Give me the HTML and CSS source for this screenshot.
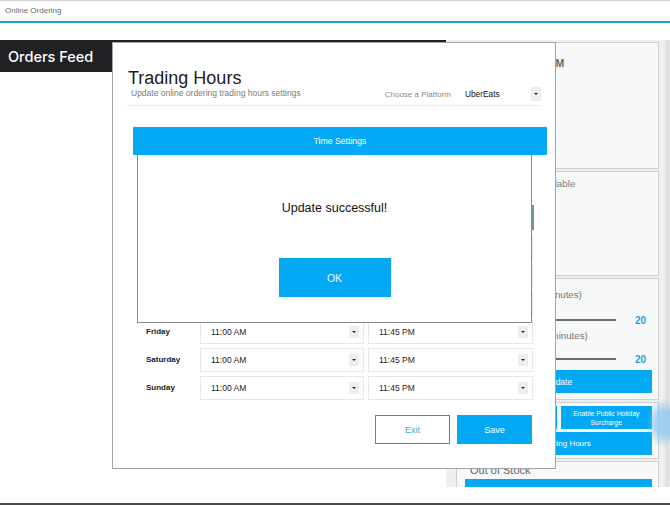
FILE: index.html
```html
<!DOCTYPE html>
<html>
	<head>
		<title>Online Ordering</title>
		<meta charset = "utf-8">
		<link rel="stylesheet" href="styles.css">
	</head>

	<body>
		<div class = "topbar">Online Ordering</div>

		<div class = "main">
			<div class = "feed">
				<p class = "feed_head">Orders Feed</p>
			</div>

			<div class = "side">
				<div class = "card card_hours">
					<p class = "open_time">Open from 11:00 AM</p>
				</div>
				<div class = "card card_status">
					<p class = "status">Delivery Status: Available</p>
				</div>
				<div class = "card card_times">
					<p class = "label first">Preparation Time (minutes)</p>
					<div class = "slider"><span class = "track"></span><span class = "val">20</span></div>
					<p class = "label">Max Delivery Time (minutes)</p>
					<div class = "slider"><span class = "track"></span><span class = "val">20</span></div>
					<button class = "side_btn update">Update</button>
				</div>
				<div class = "card card_actions">
					<button class = "side_btn">Pause Orders</button>
					<button class = "side_btn small">Enable Public Holiday<br>Surcharge</button>
					<button class = "side_btn wide">Set Trading Hours</button>
				</div>
				<div class = "card card_stock">
					<p class = "stock_tit">Out of Stock</p>
					<button class = "side_btn">Items</button>
				</div>
			</div>

			<div class = "scroll"></div>
		</div>

		<div class = "bottom"></div>

		<div class = "glow"></div>

		<div class = "modal">
			<div class = "modal_head">
				<div class = "head_left">
					<h1 class = "modal_tit">Trading Hours</h1>
					<p class = "modal_sub">Update online ordering trading hours settings</p>
				</div>
				<div class = "platform">
					<span class = "platform_tit">Choose a Platform</span>
					<span class = "select platform_sel">UberEats<i class = "arrow"></i></span>
				</div>
			</div>

			<p class = "bar">Time Settings</p>

			<div class = "hours">
				<span class = "col_tit"></span><span class = "col_tit">Open</span><span class = "col_tit">Close</span>

				<span class = "day">Monday</span>
				<span class = "select">11:00 AM<i class = "arrow"></i></span>
				<span class = "select">11:45 PM<i class = "arrow"></i></span>

				<span class = "day">Tuesday</span>
				<span class = "select">11:00 AM<i class = "arrow"></i></span>
				<span class = "select">11:45 PM<i class = "arrow"></i></span>

				<span class = "day">Wednesday</span>
				<span class = "select">11:00 AM<i class = "arrow"></i></span>
				<span class = "select">11:45 PM<i class = "arrow"></i></span>

				<span class = "day">Thursday</span>
				<span class = "select">11:00 AM<i class = "arrow"></i></span>
				<span class = "select">11:45 PM<i class = "arrow"></i></span>

				<span class = "day">Friday</span>
				<span class = "select">11:00 AM<i class = "arrow"></i></span>
				<span class = "select">11:45 PM<i class = "arrow"></i></span>

				<span class = "day">Saturday</span>
				<span class = "select">11:00 AM<i class = "arrow"></i></span>
				<span class = "select">11:45 PM<i class = "arrow"></i></span>

				<span class = "day">Sunday</span>
				<span class = "select">11:00 AM<i class = "arrow"></i></span>
				<span class = "select">11:45 PM<i class = "arrow"></i></span>
			</div>

			<div class = "modal_foot">
				<button class = "btn_exit">Exit</button>
				<button class = "btn_save">Save</button>
			</div>
		</div>

		<div class = "alert">
			<p class = "alert_msg">Update successful!</p>
			<button class = "btn_ok">OK</button>
		</div>
	</body>
</html>
```

FILE: styles.css
```css
body, p, h1, button {
	margin: 0;
	padding: 0;
}

body {
	width: 670px;
	height: 505px;
	overflow: hidden;
	background: #fff;
	font-family: "Liberation Sans", Arial, sans-serif;
	color: #222;
}

button {
	font-family: "Liberation Sans", Arial, sans-serif;
	border: none;
	cursor: pointer;
}

/* app frame */
.topbar {
	height: 20px;
	border-top: 1px solid #d4d4d4;
	border-bottom: 2px solid #1fa3c8;
	padding-left: 5px;
	font-size: 8px;
	line-height: 20px;
	color: #6a6a6a;
}
.main {
	display: flex;
	margin-top: 17px;
	height: 447px;
	overflow: hidden;
}
.feed {
	width: 446px;
}
.feed_head {
	height: 32px;
	background-color: #202125;
	padding-left: 8px;
	font: 500 14.5px/33px Inter, "Liberation Sans", sans-serif;
	color: #fff;
}
.bottom {
	height: 2px;
	margin-top: 16px;
	background-color: #4b4b4b;
}

/* right panel */
.side {
	width: 203px;
	padding: 2px 6px 0 10px;
	background-color: #efefef;
}
.scroll {
	width: 5px;
	background-color: #e2e2e2;
}
.card {
	box-sizing: border-box;
	background-color: #f7f8f8;
	border: 1px solid #cfcfcf;
	margin-bottom: 2px;
	padding: 0 6px 0 8px;
}
.card_hours {
	height: 127px;
	padding-top: 14px;
}
.open_time {
	font-size: 10.5px;
	line-height: 13px;
	font-weight: bold;
	color: #666;
	margin-left: -2px;
}
.card_status {
	height: 105px;
	padding-top: 6px;
}
.status {
	font-size: 9.8px;
	line-height: 12px;
	color: #7a7a7a;
}
.card_times {
	height: 122px;
	padding-top: 10px;
}
.card_times .label {
	font-size: 9.7px;
	line-height: 12px;
	color: #777;
	margin-top: 4px;
}
.card_times .label.first {
	margin-top: 0;
}
.slider {
	display: flex;
	align-items: center;
	height: 12px;
	margin-top: 13px;
	padding-right: 6px;
}
.card_times .label + .slider {
	margin-top: 11px;
}
.card_times .label.first + .slider {
	margin-top: 13px;
}
.slider .track {
	flex: 1;
	height: 2px;
	background-color: #6c6c6c;
	margin-right: 19px;
}
.slider .val {
	font-size: 10px;
	font-weight: bold;
	color: #2a9fd4;
}
.side_btn {
	display: block;
	background-color: #03a9f4;
	color: #fff;
	font-size: 8.5px;
	height: 23px;
}
.update {
	width: 100%;
	margin-top: 5px;
}
.card_actions {
	height: 57px;
	padding-top: 3px;
	display: grid;
	grid-template-columns: 1fr 1fr;
	grid-template-rows: 23px 23px;
	gap: 3px 4px;
}
.card_actions .small {
	font-size: 6.8px;
	line-height: 9px;
}
.card_actions .wide {
	grid-column: 1 / 3;
	font-size: 8px;
}
.card_stock {
	padding-top: 2px;
}
.stock_tit {
	font-size: 11px;
	line-height: 13px;
	color: #666;
	padding-left: 5px;
}
.card_stock .side_btn {
	width: 100%;
	margin-top: 2px;
	height: 22px;
	line-height: 22px;
}

/* cursor ripple on the right edge */
.glow {
	position: absolute;
	left: 646px;
	top: 398px;
	width: 36px;
	height: 50px;
	background: radial-gradient(ellipse at center, rgba(150, 205, 240, 0.95) 0%, rgba(120, 190, 240, 0.6) 35%, rgba(255, 255, 255, 0) 70%);
}

/* trading hours modal */
.modal {
	position: absolute;
	left: 112px;
	top: 42px;
	width: 444px;
	height: 427px;
	box-sizing: border-box;
	background-color: #fff;
	border: 1px solid #a3a3a3;
	padding: 0 14px;
}
.modal_head {
	display: flex;
	justify-content: space-between;
	align-items: flex-end;
	padding-top: 25px;
	padding-bottom: 4px;
	border-bottom: 1px solid #ebebeb;
}
.modal_tit {
	font-size: 18px;
	line-height: 20px;
	font-weight: normal;
	color: #1c1c1c;
	padding-left: 1px;
}
.modal_sub {
	font-size: 8.5px;
	line-height: 10px;
	color: #7b7b7b;
	margin: 0 0 3px 4px;
}
.platform {
	display: flex;
	align-items: center;
	height: 14px;
}
.platform_tit {
	font-size: 8px;
	color: #8a8a8a;
	margin-right: 14px;
}
.select {
	position: relative;
	display: flex;
	align-items: center;
	box-sizing: border-box;
	font-size: 8.5px;
	color: #222;
}
.platform_sel {
	width: 76px;
	height: 14px;
	font-size: 8.3px;
	color: #111;
}
.arrow {
	position: absolute;
	right: 0;
	top: 50%;
	width: 10px;
	height: 12px;
	margin-top: -6px;
	background-color: #eeeeee;
}
.platform_sel .arrow {
	height: 14px;
	margin-top: -7px;
}
.arrow:after {
	content: "";
	position: absolute;
	left: 3px;
	top: 5px;
	border-left: 2px solid transparent;
	border-right: 2px solid transparent;
	border-top: 2px solid #222;
}
.platform_sel .arrow:after {
	top: 6px;
}
.bar {
	height: 28px;
	margin: 21px -6px 0 6px;
	background-color: #03a9f4;
	color: #fff;
	font-size: 8.7px;
	line-height: 28px;
	text-align: center;
}
.hours {
	display: grid;
	grid-template-columns: 50px 164px 165px;
	grid-auto-rows: 24px;
	gap: 4px 4px;
	margin: 25px 0 0 19px;
}
.col_tit {
	font-size: 8px;
	color: #777;
	line-height: 24px;
}
.day {
	font-size: 8px;
	font-weight: bold;
	line-height: 24px;
	color: #222;
}
.hours .select {
	border: 1px solid #e7e7e7;
	padding-left: 10px;
}
.hours .select .arrow {
	right: 4px;
}
.modal_foot {
	display: flex;
	justify-content: flex-end;
	gap: 7px;
	margin: 15px 9px 0 0;
}
.btn_exit, .btn_save {
	width: 75px;
	height: 29px;
	font-size: 9px;
	box-sizing: border-box;
}
.btn_exit {
	background-color: #fff;
	border: 1px solid #2f95b0;
	color: #46aac5;
}
.btn_save {
	background-color: #03a9f4;
	color: #fff;
}

/* success popup */
.alert {
	position: absolute;
	left: 137px;
	top: 155px;
	width: 395px;
	height: 168px;
	box-sizing: border-box;
	background-color: #fff;
	border: 1px solid #8c8c8c;
	border-top: none;
	padding-top: 46px;
	text-align: center;
}
.alert:after {
	content: "";
	position: absolute;
	right: -3px;
	top: 50px;
	width: 2px;
	height: 25px;
	background-color: #6f9a97;
}
.alert_msg {
	font-size: 12.5px;
	line-height: 15px;
	color: #111;
}
.btn_ok {
	display: block;
	width: 112px;
	height: 39px;
	margin: 42px auto 0;
	background-color: #03a9f4;
	color: #eaf8ff;
	font-size: 10.5px;
}
```
